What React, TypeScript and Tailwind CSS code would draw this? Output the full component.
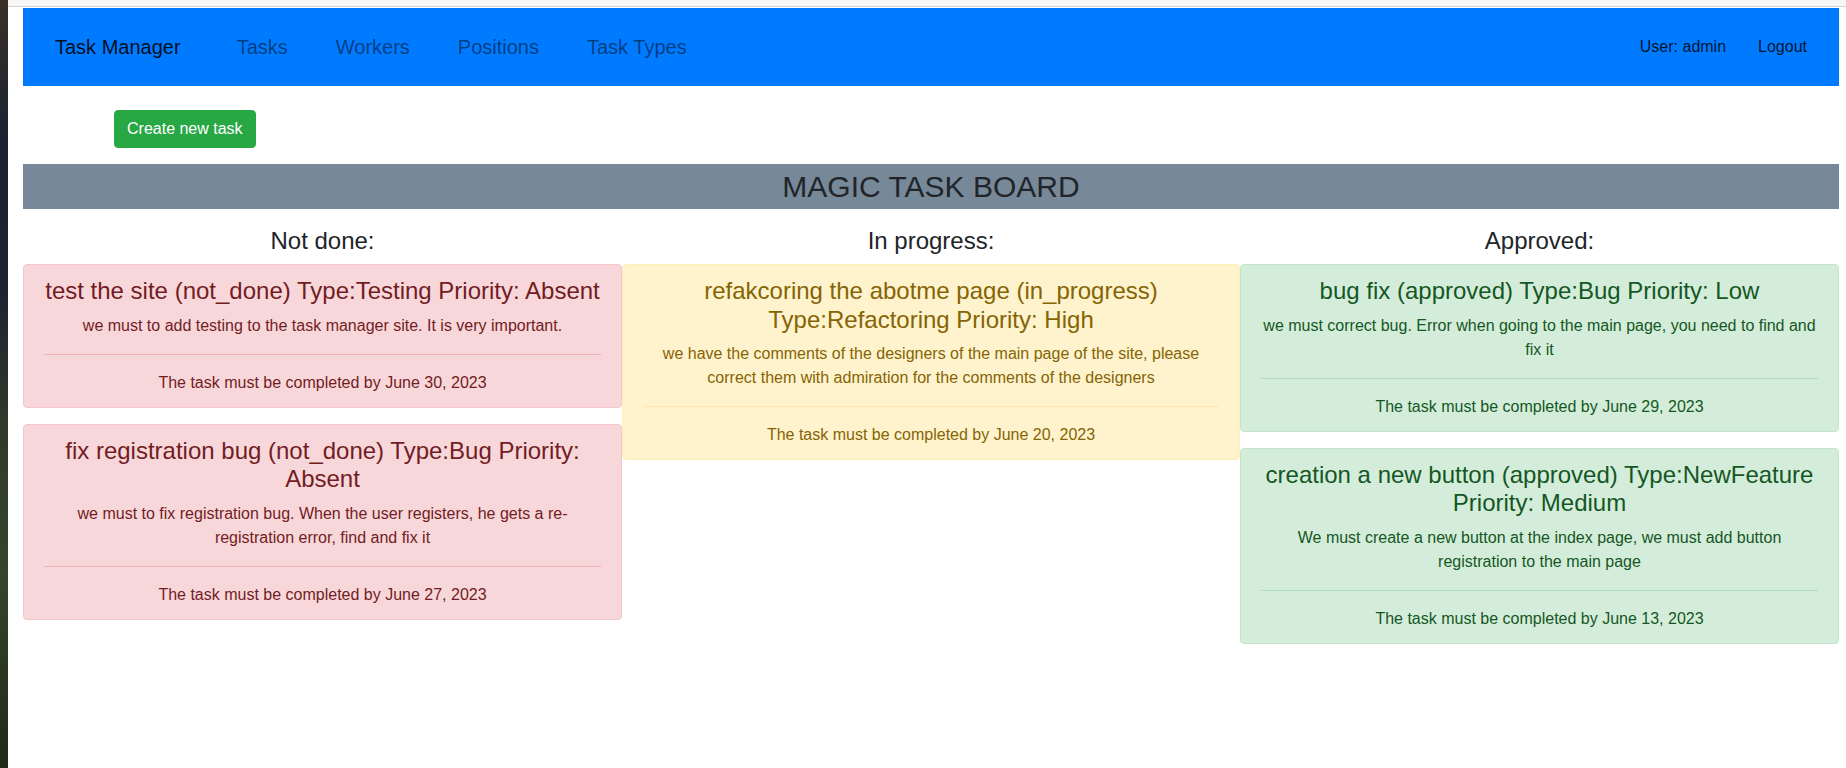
import React from "react";

type Variant = "danger" | "warning" | "success";

const styles: Record<Variant, { card: string; hr: string }> = {
  danger: {
    card: "bg-[#f8d7da] border-[#f5c6cb] text-[#721c24]",
    hr: "border-[#f1b0b7]",
  },
  warning: {
    card: "bg-[#fff3cd] border-[#ffeeba] text-[#856404]",
    hr: "border-[#ffe8a1]",
  },
  success: {
    card: "bg-[#d4edda] border-[#c3e6cb] text-[#155724]",
    hr: "border-[#b1dfbb]",
  },
};

type Task = { title: string; desc: string; date: string };

function Card({ task, variant }: { task: Task; variant: Variant }) {
  const s = styles[variant];
  return (
    <div className={`border rounded-[4px] px-[20px] py-[12px] mb-[16px] text-center ${s.card}`}>
      <h4 className="text-[24px] leading-[1.2] mb-[8px]">{task.title}</h4>
      <p className="text-[16px] leading-[1.5] mb-[16px]">{task.desc}</p>
      <hr className={`border-0 border-t mb-[16px] ${s.hr}`} />
      <p className="text-[16px] leading-[1.5]">The task must be completed by {task.date}</p>
    </div>
  );
}

function Column({ title, tasks, variant }: { title: string; tasks: Task[]; variant: Variant }) {
  return (
    <div className="flex flex-col">
      <h4 className="mt-[18px] mb-[8px] text-[24px] leading-[1.2] text-center text-[#212529]">{title}</h4>
      {tasks.map((t, i) => (
        <Card key={i} task={t} variant={variant} />
      ))}
    </div>
  );
}

const notDone: Task[] = [
  {
    title: "test the site (not_done) Type:Testing Priority: Absent",
    desc: "we must to add testing to the task manager site. It is very important.",
    date: "June 30, 2023",
  },
  {
    title: "fix registration bug (not_done) Type:Bug Priority: Absent",
    desc: "we must to fix registration bug. When the user registers, he gets a re-registration error, find and fix it",
    date: "June 27, 2023",
  },
];

const inProgress: Task[] = [
  {
    title: "refakcoring the abotme page (in_progress) Type:Refactoring Priority: High",
    desc: "we have the comments of the designers of the main page of the site, please correct them with admiration for the comments of the designers",
    date: "June 20, 2023",
  },
];

const approved: Task[] = [
  {
    title: "bug fix (approved) Type:Bug Priority: Low",
    desc: "we must correct bug. Error when going to the main page, you need to find and fix it",
    date: "June 29, 2023",
  },
  {
    title: "creation a new button (approved) Type:NewFeature Priority: Medium",
    desc: "We must create a new button at the index page, we must add button registration to the main page",
    date: "June 13, 2023",
  },
];

export default function App() {
  return (
    <div className="flex min-h-[768px] w-full bg-white font-['Liberation_Sans',Arial,sans-serif]">
      <div className="w-[8px] shrink-0 bg-[linear-gradient(to_bottom,#3a3028_0%,#1b2332_18%,#1c2431_38%,#2e3a2a_55%,#34452b_75%,#1f2a18_100%)]" />
      <div className="flex-1 flex flex-col min-w-0">
        <div className="h-[7px] bg-[#f7f7f7] border-b border-[#d4d4d4]" />
        <div className="pl-[15px] pr-[7px] pt-[1px]">
          <nav className="h-[78px] bg-[#007bff] flex items-center pl-[32px] pr-[32px]">
            <span className="text-[20px] text-black/90">Task Manager</span>
            <div className="flex items-center gap-[48px] ml-[56px] text-[20px] text-black/50">
              <span>Tasks</span>
              <span>Workers</span>
              <span>Positions</span>
              <span>Task Types</span>
            </div>
            <div className="ml-auto flex items-center gap-[32px] text-[16px] text-black/85">
              <span>User: admin</span>
              <span>Logout</span>
            </div>
          </nav>
          <div className="mt-[24px] ml-[91px]">
            <button className="h-[38px] px-[12px] border border-[#28a745] bg-[#28a745] text-white text-[16px] leading-[1.5] rounded-[4px]">
              Create new task
            </button>
          </div>
          <div className="mt-[16px] h-[45px] bg-[#778899] flex items-center justify-center">
            <h2 className="text-[30px] leading-[1.2] text-[#212529]">MAGIC TASK BOARD</h2>
          </div>
          <div className="grid grid-cols-[599px_618px_599px] items-start">
            <Column title="Not done:" tasks={notDone} variant="danger" />
            <Column title="In progress:" tasks={inProgress} variant="warning" />
            <Column title="Approved:" tasks={approved} variant="success" />
          </div>
        </div>
      </div>
    </div>
  );
}
